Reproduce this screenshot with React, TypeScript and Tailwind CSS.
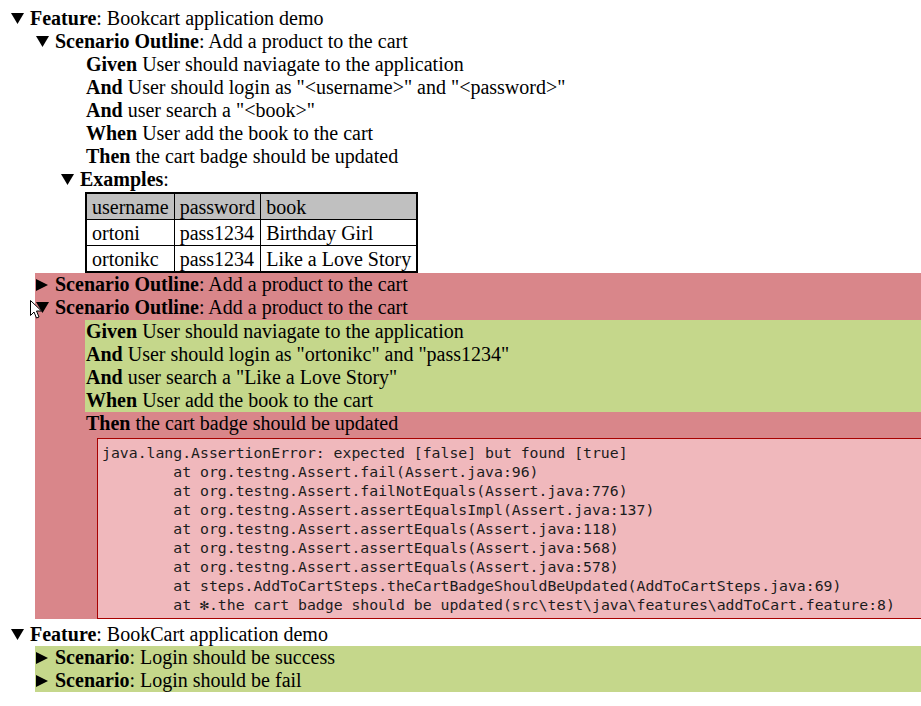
import React from "react";

const Down = () => (
  <svg width="13" height="11" viewBox="0 0 13 11" className="mr-[6px] shrink-0">
    <polygon points="0,0 13,0 6.5,11" fill="#000" />
  </svg>
);

const Right = () => (
  <svg width="12" height="12" viewBox="0 0 12 12" className="mr-[7px] shrink-0">
    <polygon points="0,0 12,6 0,12" fill="#000" />
  </svg>
);

const Row = ({ children, className = "" }: { children: React.ReactNode; className?: string }) => (
  <div className={`flex items-center h-[23px] whitespace-nowrap ${className}`}>{children}</div>
);

const Step = ({ k, t }: { k: string; t: string }) => (
  <div className="h-[23px] whitespace-nowrap">
    <b>{k}</b> {t}
  </div>
);

const trace = [
  "java.lang.AssertionError: expected [false] but found [true]",
  "\tat org.testng.Assert.fail(Assert.java:96)",
  "\tat org.testng.Assert.failNotEquals(Assert.java:776)",
  "\tat org.testng.Assert.assertEqualsImpl(Assert.java:137)",
  "\tat org.testng.Assert.assertEquals(Assert.java:118)",
  "\tat org.testng.Assert.assertEquals(Assert.java:568)",
  "\tat org.testng.Assert.assertEquals(Assert.java:578)",
  "\tat steps.AddToCartSteps.theCartBadgeShouldBeUpdated(AddToCartSteps.java:69)",
  "\tat \u273B.the cart badge should be updated(src\\test\\java\\features\\addToCart.feature:8)",
].join("\n");

export default function App() {
  const cell = "border border-black px-[5px] pt-[2px] pb-0 text-left font-normal";
  return (
    <div
      className="relative w-[921px] min-h-[706px] overflow-hidden bg-white pt-[7px] text-[20px] leading-[23px] text-black"
      style={{ fontFamily: '"Liberation Serif", "Times New Roman", serif' }}
    >
      <Row className="pl-[11px]">
        <Down />
        <span>
          <b>Feature</b>: Bookcart application demo
        </span>
      </Row>
      <Row className="pl-[36px]">
        <Down />
        <span>
          <b>Scenario Outline</b>: Add a product to the cart
        </span>
      </Row>
      <div className="pl-[86px]">
        <Step k="Given" t="User should naviagate to the application" />
        <Step k="And" t={'User should login as "<username>" and "<password>"'} />
        <Step k="And" t={'user search a "<book>"'} />
        <Step k="When" t="User add the book to the cart" />
        <Step k="Then" t="the cart badge should be updated" />
      </div>
      <Row className="pl-[61px]">
        <Down />
        <span>
          <b>Examples</b>:
        </span>
      </Row>
      <table className="ml-[85px] mt-[1px] border-collapse border-2 border-black">
        <thead>
          <tr className="bg-[#c0c0c0]">
            <th className={cell}>username</th>
            <th className={cell}>password</th>
            <th className={cell}>book</th>
          </tr>
        </thead>
        <tbody>
          <tr>
            <td className={cell}>ortoni</td>
            <td className={cell}>pass1234</td>
            <td className={cell}>Birthday Girl</td>
          </tr>
          <tr>
            <td className={cell}>ortonikc</td>
            <td className={cell}>pass1234</td>
            <td className={cell}>Like a Love Story</td>
          </tr>
        </tbody>
      </table>

      <div className="ml-[35px] bg-[#d9868a]">
        <Row className="pl-[1px]">
          <Right />
          <span>
            <b>Scenario Outline</b>: Add a product to the cart
          </span>
        </Row>
        <Row className="pl-[1px]">
          <Down />
          <span>
            <b>Scenario Outline</b>: Add a product to the cart
          </span>
        </Row>
        <div className="ml-[50px] mt-[1px] bg-[#c5d78b] pl-[1px]">
          <Step k="Given" t="User should naviagate to the application" />
          <Step k="And" t={'User should login as "ortonikc" and "pass1234"'} />
          <Step k="And" t={'user search a "Like a Love Story"'} />
          <Step k="When" t="User add the book to the cart" />
        </div>
        <div className="pl-[51px]">
          <Step k="Then" t="the cart badge should be updated" />
        </div>
        <pre
          className="ml-[62px] mr-[-30px] mt-[3px] border border-[#a80000] bg-[#f0b8bc] p-[4px] text-[14.8px] leading-[19px] text-[#1c1c1c]"
          style={{ fontFamily: '"DejaVu Sans Mono", "Liberation Mono", monospace', tabSize: 8 }}
        >
          {trace}
        </pre>
      </div>

      <Row className="mt-[4px] pl-[11px]">
        <Down />
        <span>
          <b>Feature</b>: BookCart application demo
        </span>
      </Row>
      <div className="ml-[35px] bg-[#c5d78b]">
        <Row className="pl-[1px]">
          <Right />
          <span>
            <b>Scenario</b>: Login should be success
          </span>
        </Row>
        <Row className="pl-[1px]">
          <Right />
          <span>
            <b>Scenario</b>: Login should be fail
          </span>
        </Row>
      </div>

      <svg
        width="12"
        height="19"
        viewBox="0 0 12 19"
        className="absolute left-[30px] top-[300px]"
      >
        <polygon
          points="0.5,0.5 0.5,15.5 4,12 6.5,18 9,17 6.5,11 11.5,11"
          fill="#fff"
          stroke="#000"
          strokeWidth="1"
        />
      </svg>
    </div>
  );
}
